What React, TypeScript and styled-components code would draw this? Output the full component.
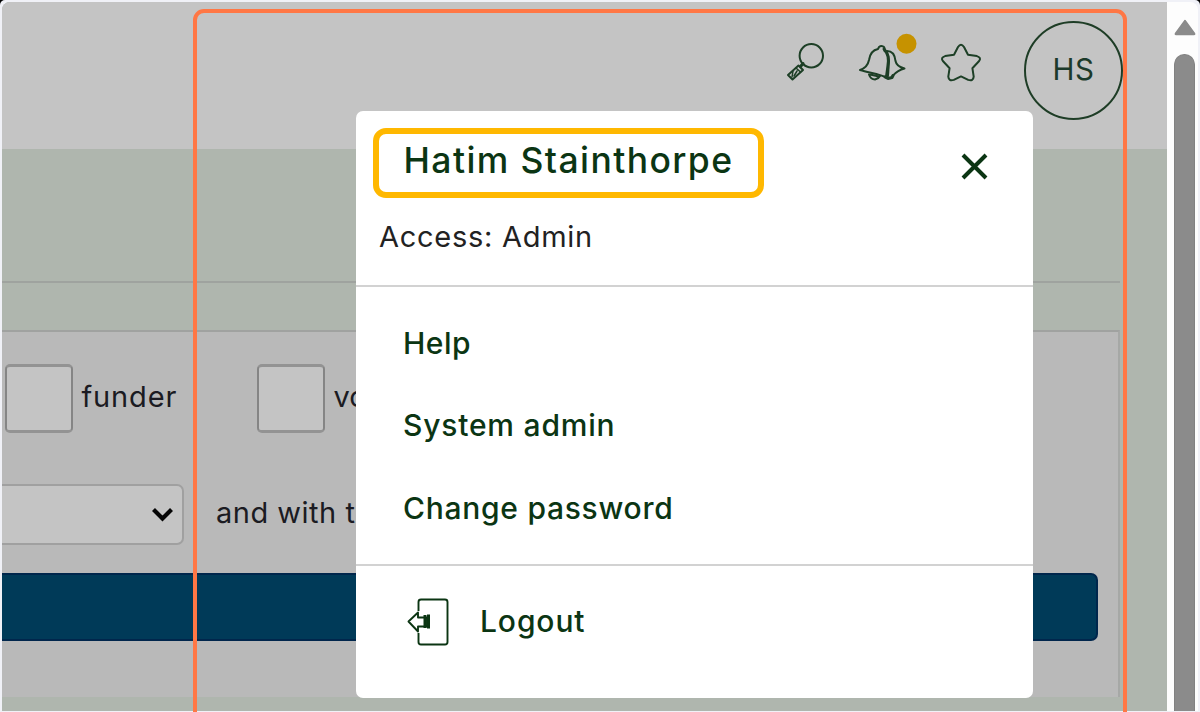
import React from 'react';
import styled, { createGlobalStyle } from 'styled-components';

const ink = '#0b3513';

const Global = createGlobalStyle`
  * { box-sizing: border-box; }
  body { margin: 0; background: #000; font-family: Inter, "Liberation Sans", sans-serif; overflow: hidden; }
`;

const Frame = styled.div`
  position: relative;
  display: flex;
  width: 1200px;
  height: 712px;
  overflow: hidden;
  background: #f0f1f7;
  border-radius: 5px 5px 0 0;
  padding: 2px 2px 1px;
`;

const Page = styled.main`
  display: flex;
  flex-direction: column;
  width: 1165px;
  background: #afb6ae;
  border-top-left-radius: 8px;
  overflow: hidden;
`;

const Header = styled.header`
  flex: none;
  display: flex;
  justify-content: flex-end;
  height: 147px;
  padding: 19px 44.500px 0 0;
  background: #c4c4c4;
`;

const HeaderIcon = styled.svg<{ $gap: number }>`
  flex: none;
  display: block;
  height: 64px;
  margin: 9px ${p => p.$gap}px 0 0;
  fill: none;
  stroke: #1d3f26;
  stroke-width: 2;
  stroke-linejoin: round;
  stroke-linecap: round;
`;

const Avatar = styled.div`
  display: flex;
  align-items: center;
  justify-content: center;
  width: 99px;
  height: 99px;
  border: 2px solid #1e3d26;
  border-radius: 50%;
  color: #1c3a2a;
  font-size: 29.5px;
  font-weight: 400;
  line-height: 36px;
  letter-spacing: 0.5px;
  padding: 0 0 3px 1px;
`;

const Rule = styled.div`
  flex: none;
  width: 1118px;
  height: 2px;
  margin-top: 132px;
  background: #9fa39f;
`;

const Panel = styled.section`
  flex: none;
  display: flex;
  flex-direction: column;
  width: 1118px;
  height: 367px;
  margin-top: 47px;
  padding-top: 32px;
  background: #b9b9b9;
  border-top: 2px solid #a0a2a0;
  border-right: 2px solid #a6a8a6;
`;

const Options = styled.div`
  display: flex;
  align-items: center;
  height: 69px;
  padding-left: 3px;
`;

const Check = styled.span`
  flex: none;
  width: 68px;
  height: 69px;
  background: #c4c4c4;
  border: 2px solid #858585;
  border-top: 3px solid #939393;
  border-bottom: 3px solid #939393;
  border-radius: 5px;
`;

const Label = styled.span<{ $width?: number; $spacing?: number }>`
  flex: none;
  width: ${p => (p.$width ? `${p.$width}px` : 'auto')};
  padding: 0 0 3px 8.500px;
  color: #1b1b22;
  font-size: 29px;
  font-weight: 400;
  line-height: 36px;
  letter-spacing: ${p => p.$spacing ?? 0}px;
  white-space: nowrap;
`;

const Filters = styled.div`
  display: flex;
  align-items: center;
  height: 61px;
  margin-top: 51px;
`;

const Select = styled.div`
  display: flex;
  align-items: center;
  justify-content: flex-end;
  width: 182px;
  height: 61px;
  padding: 0 7px 2px 0;
  margin-right: 23.500px;
  background: #c4c4c4;
  border: 2px solid #a0a0a0;
  border-left: 0;
  border-radius: 0 7px 7px 0;
`;

const Submit = styled.div`
  width: 1096.400px;
  height: 68px;
  margin-top: 28px;
  background: #003a58;
  border: 2px solid #00264c;
  border-left: 0;
  border-radius: 0 7px 7px 0;
`;

const Scroll = styled.aside`
  display: flex;
  flex-direction: column;
  align-items: center;
  width: 31px;
  padding: 17px 0 0 5px;
  background: #fdfdfd;
  border-top-right-radius: 8px;
  overflow: hidden;
`;

const Thumb = styled.div`
  flex: 1;
  width: 21px;
  margin: 18px 1px 0 0;
  background: #8b8b8b;
  border: 1px solid #818181;
  border-bottom: 0;
  border-radius: 11px 11px 0 0;
`;

const Arrow = styled.svg`
  flex: none;
  display: block;
  margin-right: 1px;
`;

const Menu = styled.div`
  position: absolute;
  left: 356px;
  top: 111px;
  display: flex;
  flex-direction: column;
  width: 677px;
  height: 587px;
  background: #fff;
  border-radius: 7px;
`;

const MenuHead = styled.div`
  display: flex;
  justify-content: space-between;
  align-items: flex-start;
  height: 176px;
  padding: 17px 45px 0 17px;
  border-bottom: 2px solid #d2d2d2;
`;

const Identity = styled.div`
  display: flex;
  flex-direction: column;
`;

const Name = styled.div`
  width: 391px;
  height: 70px;
  padding-left: 24.500px;
  border: 6px solid #ffb800;
  border-radius: 13px;
  color: ${ink};
  font-size: 35.500px;
  font-weight: 500;
  line-height: 54px;
  letter-spacing: 1.4px;
  white-space: nowrap;
`;

const Access = styled.div`
  padding: 21px 0 0 6px;
  color: #222;
  font-size: 29px;
  font-weight: 400;
  line-height: 36px;
  letter-spacing: 0.72px;
  white-space: nowrap;
`;

const Close = styled.svg`
  display: block;
  margin-top: 25px;
`;

const Items = styled.nav`
  display: flex;
  flex-direction: column;
  height: 279px;
  padding: 14.500px 0 0 47px;
  border-bottom: 2px solid #d2d2d2;
`;

const Item = styled.span<{ $spacing: number }>`
  height: 82.5px;
  color: ${ink};
  font-size: 30px;
  font-weight: 500;
  line-height: 82.5px;
  letter-spacing: ${p => p.$spacing}px;
  white-space: nowrap;
`;

const Logout = styled.div`
  display: flex;
  align-items: center;
  height: 110px;
  padding-left: 49px;
  gap: 29px;
`;

const LogoutIcon = styled.svg`
  display: block;
  margin-top: 2px;
`;

const Outline = styled.div`
  position: absolute;
  left: 193px;
  top: 9px;
  width: 934px;
  height: 730px;
  border: 4px solid #ff7745;
  border-radius: 11px;
  pointer-events: none;
`;

export default function App() {
  return (
    <Frame>
      <Global />
      <Page>
        <Header>
          <HeaderIcon $gap={30} width="44" viewBox="784 30 44 64">
            <circle cx="811.3" cy="55.7" r="11.7" />
            <path strokeWidth="3" d="M803 63.500l-2.500 3" />
            <path d="M798.500 65.500l4.500 4.500-10.500 9.500-4.500-4.500z" />
            <path strokeWidth="1.500" d="M796 68l4.500 4M793 71l-1 6M797 71l-3 5" />
          </HeaderIcon>
          <HeaderIcon $gap={22} width="60" viewBox="858 30 60 64">
            <path d="M860 70c6-2 8-5 9-10 1-7 4-10 9-11l1-2c2-1.500 5-1 5.500 1l0 3c5 3 5 9 4 15 0 5 0 8-1 12-8-4-18-5-27.500-8z" />
            <path d="M887 51c6 0 8 5 8.500 10 .8 4 3 6 9 7.500-5 1-8 3-12 7.500M869 74.500c1 3 3 5 6 5 2-.5 4-1.500 5-3.500M870 74.500l9 2" />
            <path strokeWidth="3" d="M884 49c5 5 5 12 3.800 18l-1.200 9M885 77l3 1.500 4-1 1-2" />
            <circle cx="906.500" cy="43.700" r="10" fill="#c69200" stroke="none" />
          </HeaderIcon>
          <HeaderIcon $gap={42} width="42" viewBox="940 30 42 64">
            <path d="M958 47q3-4.500 6 0l4 7.800 8.900 1.300q5 1.600 2 5.200l-6.500 6.900 1.300 8.500q-.4 4.800-5.500 3.200l-7.200-3.500-7.200 3.500q-5.100 1.600-5.500-3.200l1.300-8.500-6.500-6.900q-3-3.600 2-5.200l8.900-1.300z" />
          </HeaderIcon>
          <Avatar>HS</Avatar>
        </Header>
        <Rule />
        <Panel>
          <Options>
            <Check />
            <Label $width={184} $spacing={0.85}>funder</Label>
            <Check />
            <Label>vo</Label>
          </Options>
          <Filters>
            <Select>
              <svg width="24" height="20" viewBox="0 0 24 20">
                <path d="M2.500 5.500l9 9 9-9" fill="none" stroke="#050505" strokeWidth="4.200" />
              </svg>
            </Select>
            <Label $spacing={0.5}>and with t</Label>
          </Filters>
          <Submit />
        </Panel>
      </Page>
      <Scroll>
        <Arrow width="22" height="17" viewBox="0 0 22 17">
          <path d="M11 1.500L20.500 14.500Q21 15.500 20 15.500H2Q1 15.500 1.500 14.500z" fill="#8b8b8b" stroke="#8b8b8b" strokeWidth="1.500" strokeLinejoin="round" />
        </Arrow>
        <Thumb />
      </Scroll>
      <Menu>
        <MenuHead>
          <Identity>
            <Name>Hatim Stainthorpe</Name>
            <Access>Access: Admin</Access>
          </Identity>
          <Close width="27" height="27" viewBox="0 0 27 27">
            <path d="M2 2l23 23M25 2L2 25" stroke={ink} strokeWidth="4" fill="none" />
          </Close>
        </MenuHead>
        <Items>
          <Item $spacing={0.5}>Help</Item>
          <Item $spacing={0.8}>System admin</Item>
          <Item $spacing={0.72}>Change password</Item>
        </Items>
        <Logout>
          <LogoutIcon width="46" height="52" viewBox="405 596 46 52" fill="none" stroke={ink} strokeWidth="1.900" strokeLinejoin="round">
            <path d="M418.500 611V602q0-2.500 2.500-2.500h24q2.500 0 2.500 2.500v40q0 2.500-2.500 2.500h-24q-2.500 0-2.500-2.500v-9" />
            <path d="M408.500 621.500l9.500-9v5h9v9h-9v5z" />
            <path strokeWidth="3" d="M425 615v13M428.500 614.500v14" />
          </LogoutIcon>
          <Item $spacing={0.9}>Logout</Item>
        </Logout>
      </Menu>
      <Outline />
    </Frame>
  );
}
